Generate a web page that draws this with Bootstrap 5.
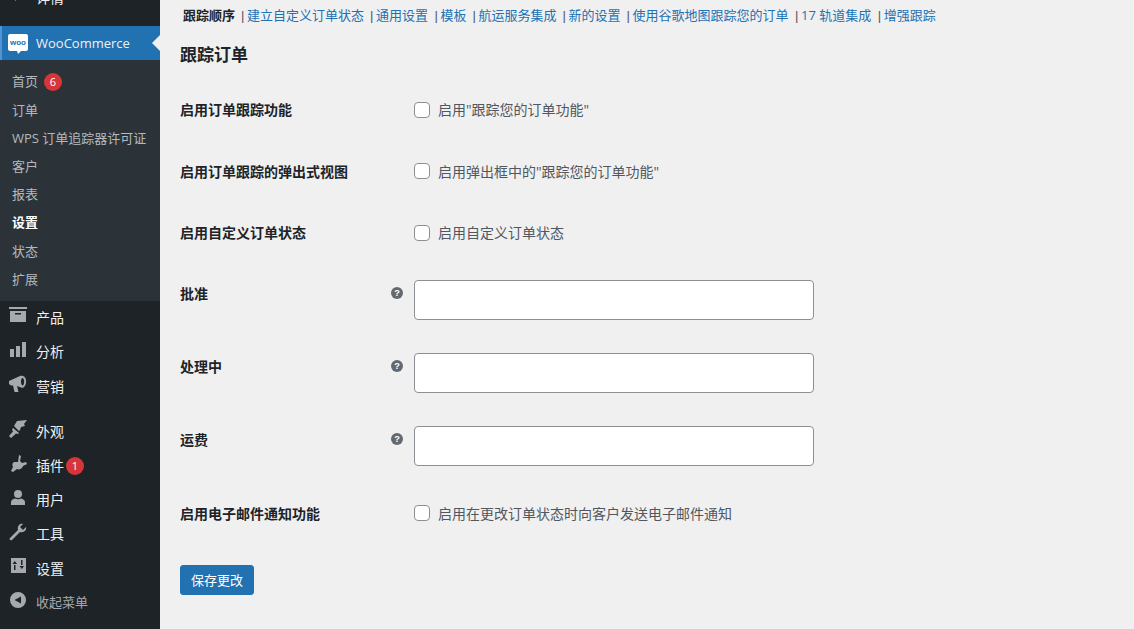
<!DOCTYPE html>
<html lang="zh-CN">
<head>
  <meta charset="UTF-8" />
  <meta name="viewport" content="width=device-width, initial-scale=1.0"/>
  <title>跟踪订单</title>
  <link href="https://cdn.jsdelivr.net/npm/bootstrap@5.3.0/dist/css/bootstrap.min.css" rel="stylesheet" />
  <style>
    html, body { height: 629px; overflow: hidden; }
    body { background: #f0f0f1; color: #3c434a; font: 14px/21px "Open Sans", "Noto Sans CJK SC", sans-serif; }
    a { text-decoration: none; }
    .wp-shell { height: 629px; overflow: hidden; }
    .wp-side { width: 160px; height: 670px; margin-top: -20px; background: #1d2327; flex: none; }
    .menu-item { height: 34.2px; color: #f0f0f1; font-size: 14px; }
    .menu-item svg { width: 20px; height: 20px; margin: 0 8px 0 8px; flex: none; fill: #a7aaad; position: relative; top: -2px; }
    .menu-gap-a { margin-bottom: 12px; }
    .menu-gap-b { margin-bottom: 11px; }
    .menu-woo { background: #2271b1; color: #f0f0f1; border-left: 2px solid #4f94d4; font-size: 13px; height: 34px; padding-top: 1px; position: relative; }
    .menu-woo svg { width: 20px; height: 20px; margin: 0 8px 0 6px; fill: #fff; }
    .menu-woo::after { content: ""; position: absolute; right: 0; top: 9px; border: 8px solid transparent; border-right-color: #f0f0f1; border-left-width: 0; }
    .woo-word { font: bold 8px/1 "Liberation Sans", sans-serif; fill: #2271b1; }
    .sub-menu { background: #2c3338; padding: 7.6px 0 7.4px; }
    .sub-menu a { display: flex; align-items: center; height: 28.2px; padding-left: 12px; color: #b4b9be; font-size: 13px; }
    .sub-menu a.now { color: #fff; font-weight: 700; }
    .count-dot { width: 18px; height: 18px; border-radius: 50%; background: #d63638; color: #fff; font-size: 11px; line-height: 18px; text-align: center; display: inline-block; }
    .sub-menu .count-dot { margin-left: 6px; }
    .menu-item .count-dot { margin-left: 2px; }
    .collapse-row { color: #a7aaad; font-size: 13px; }
    .main-col { padding: 5px 20px 0; flex: 1; }
    .tab-line { height: 22px; font-size: 13px; white-space: nowrap; }
    .tab-line b { color: #1d2327; margin: 0 6px 0 3px; }
    .tab-line a { color: #2271b1; margin: 0 6px 0 2.6px; }
    .tab-line a.more { margin-right: 6.5px; }
    .tab-line i { font-family: "Liberation Sans", sans-serif; font-style: normal; color: #50575e; }
    .page-title { color: #1d2327; font-size: 17px; font-weight: 700; line-height: 24px; margin: 16px 0 12px; }
    .opt-row { padding: 16.5px 0; }
    .opt-check { padding: 20.25px 0; }
    .opt-label { width: 210px; flex: none; color: #1d2327; font-weight: 700; font-size: 14px; line-height: 21px; }
    .opt-row .opt-label { padding-top: 3px; }
    .opt-help { width: 24px; flex: none; padding: 7px 0 0; }
    .opt-help svg { width: 12px; height: 12px; display: block; margin-left: 1px; }
    .opt-input { width: 400px; height: 40px; border: 1px solid #8c8f94; border-radius: 4px; background: #fff; }
    .opt-box { width: 16px; height: 16px; margin: 0 8px 0 24px; border: 1px solid #8c8f94; border-radius: 4px; background: #fff; box-shadow: none; appearance: none; flex: none; }
    .opt-text { color: #50575e; font-size: 14px; line-height: 21px; }
    .save-btn { background: #2271b1; border: 1px solid #2271b1; color: #fff; font-size: 13px; line-height: 28px; padding: 0 10px; border-radius: 3px; height: 30px; width: 74px; margin-top: 21px; white-space: nowrap; }
  </style>
</head>
<body>
  <div class="wp-shell d-flex">
    <nav class="wp-side">
      <a class="menu-item menu-gap-a d-flex align-items-center" href="#">
        <svg viewBox="0 0 20 20"><path d="M7 4l8 6-8 6z"/></svg>详情
      </a>

      <a class="menu-woo d-flex align-items-center" href="#">
        <svg viewBox="0 0 20 20"><path d="M2 0h16a2 2 0 0 1 2 2v13a2 2 0 0 1-2 2h-5l-3 3-1-3H2a2 2 0 0 1-2-2V2a2 2 0 0 1 2-2z"/><text class="woo-word" x="10" y="11" text-anchor="middle">woo</text></svg>WooCommerce
      </a>
      <div class="sub-menu">
        <a href="#">首页<span class="count-dot">6</span></a>
        <a href="#">订单</a>
        <a href="#">WPS 订单追踪器许可证</a>
        <a href="#">客户</a>
        <a href="#">报表</a>
        <a class="now" href="#">设置</a>
        <a href="#">状态</a>
        <a href="#">扩展</a>
      </div>

      <a class="menu-item d-flex align-items-center" href="#">
        <svg viewBox="0 0 20 20"><path d="M1 1h18v2H1zM2 5h16v11H2zm5 2v1.5h6V7z" fill-rule="evenodd"/></svg>产品
      </a>
      <a class="menu-item d-flex align-items-center" href="#">
        <svg viewBox="0 0 20 20"><path d="M2 9h4v8H2zM8 6h4v11H8zM14 2h4v15h-4z"/></svg>分析
      </a>
      <a class="menu-item menu-gap-b d-flex align-items-center" href="#">
        <svg viewBox="0 0 20 20"><path d="M1 7l11-5c1-.5 2-.5 3 0 4 1 4 9 1 11-1 1-2 1-3 .5L9 12l1.5 6h-4L5 11.500H3L1 10zM14.500 4c-2 0-2 7 0 7.500 2 0 2.500-7 0-7.500z" fill-rule="evenodd"/></svg>营销
      </a>
      <a class="menu-item d-flex align-items-center" href="#">
        <svg viewBox="0 0 20 20"><path d="M9 2l10-1-3 4 1 2-4 1-1 3-1 1-5-5zM5 9l6 5-1 1-2-.5L3 19 1 17l4-4.500L4 10.500z"/></svg>外观
      </a>
      <a class="menu-item d-flex align-items-center" href="#">
        <svg viewBox="0 0 20 20"><path d="M11 1l2 1-1 5 2 2 4-1 1 2-4 2c-1 3-4 4-6 3l-4 3-2-1 2-4c-1-2-1-4 1-5l4 0z"/></svg>插件<span class="count-dot">1</span>
      </a>
      <a class="menu-item d-flex align-items-center" href="#">
        <svg viewBox="0 0 20 20"><circle cx="10" cy="6" r="4"/><path d="M3 17v-3c0-2 2-3 4-3.500 2 1 4 1 6 0 2 .5 4 1.500 4 3.500v3z"/></svg>用户
      </a>
      <a class="menu-item d-flex align-items-center" href="#">
        <svg viewBox="0 0 20 20"><path d="M18 5c1 3-2 6-6 5l-8 8c-2 1-3-1-2-2l8-8c-1-4 2-7 5-6l-3 3 3 3z"/></svg>工具
      </a>
      <a class="menu-item d-flex align-items-center" href="#">
        <svg viewBox="0 0 20 20"><path d="M3 2h15v15H3zM6 9v5h1.500V9zM4.500 8h4.500L6.800 5zM13 4v5h1.500V4zM11.500 10h4.500l-2.200 3z" fill-rule="evenodd"/></svg>设置
      </a>
      <a class="menu-item collapse-row d-flex align-items-center" href="#">
        <svg viewBox="0 0 20 20"><path d="M10 2a8 8 0 1 1 0 16 8 8 0 0 1 0-16zm3 4.500L6.500 10l6.500 3.500z" fill-rule="evenodd"/></svg>收起菜单
      </a>
    </nav>

    <main class="main-col">
      <div class="tab-line"><b>跟踪顺序</b><i>|</i><a href="#">建立自定义订单状态</a><i>|</i><a class="more" href="#">通用设置</a><i>|</i><a href="#">模板</a><i>|</i><a href="#">航运服务集成</a><i>|</i><a href="#">新的设置</a><i>|</i><a class="more" href="#">使用谷歌地图跟踪您的订单</a><i>|</i><a class="more" href="#">17 轨道集成</a><i>|</i><a href="#">增强跟踪</a></div>
      <h2 class="page-title">跟踪订单</h2>
      <form>
        <div class="opt-check d-flex align-items-center">
          <div class="opt-label">启用订单跟踪功能</div>
          <input class="opt-box" type="checkbox" id="c1" />
          <label class="opt-text" for="c1">启用"跟踪您的订单功能"</label>
        </div>
        <div class="opt-check d-flex align-items-center">
          <div class="opt-label">启用订单跟踪的弹出式视图</div>
          <input class="opt-box" type="checkbox" id="c2" />
          <label class="opt-text" for="c2">启用弹出框中的"跟踪您的订单功能"</label>
        </div>
        <div class="opt-check d-flex align-items-center">
          <div class="opt-label">启用自定义订单状态</div>
          <input class="opt-box" type="checkbox" id="c3" />
          <label class="opt-text" for="c3">启用自定义订单状态</label>
        </div>
        <div class="opt-row d-flex">
          <div class="opt-label">批准</div>
          <div class="opt-help"><svg viewBox="0 0 13 13"><circle cx="6.500" cy="6.500" r="6.500" fill="#646970"/><text x="6.500" y="10" text-anchor="middle" fill="#fff" font-size="10" font-weight="700" font-family="Liberation Sans, sans-serif">?</text></svg></div>
          <input class="opt-input" type="text" />
        </div>
        <div class="opt-row d-flex">
          <div class="opt-label">处理中</div>
          <div class="opt-help"><svg viewBox="0 0 13 13"><circle cx="6.500" cy="6.500" r="6.500" fill="#646970"/><text x="6.500" y="10" text-anchor="middle" fill="#fff" font-size="10" font-weight="700" font-family="Liberation Sans, sans-serif">?</text></svg></div>
          <input class="opt-input" type="text" />
        </div>
        <div class="opt-row d-flex">
          <div class="opt-label">运费</div>
          <div class="opt-help"><svg viewBox="0 0 13 13"><circle cx="6.500" cy="6.500" r="6.500" fill="#646970"/><text x="6.500" y="10" text-anchor="middle" fill="#fff" font-size="10" font-weight="700" font-family="Liberation Sans, sans-serif">?</text></svg></div>
          <input class="opt-input" type="text" />
        </div>
        <div class="opt-check d-flex align-items-center">
          <div class="opt-label">启用电子邮件通知功能</div>
          <input class="opt-box" type="checkbox" id="c4" />
          <label class="opt-text" for="c4">启用在更改订单状态时向客户发送电子邮件通知</label>
        </div>
        <button type="button" class="save-btn btn">保存更改</button>
      </form>
    </main>
  </div>
  <script src="https://cdn.jsdelivr.net/npm/bootstrap@5.3.0/dist/js/bootstrap.bundle.min.js"></script>
</body>
</html>
